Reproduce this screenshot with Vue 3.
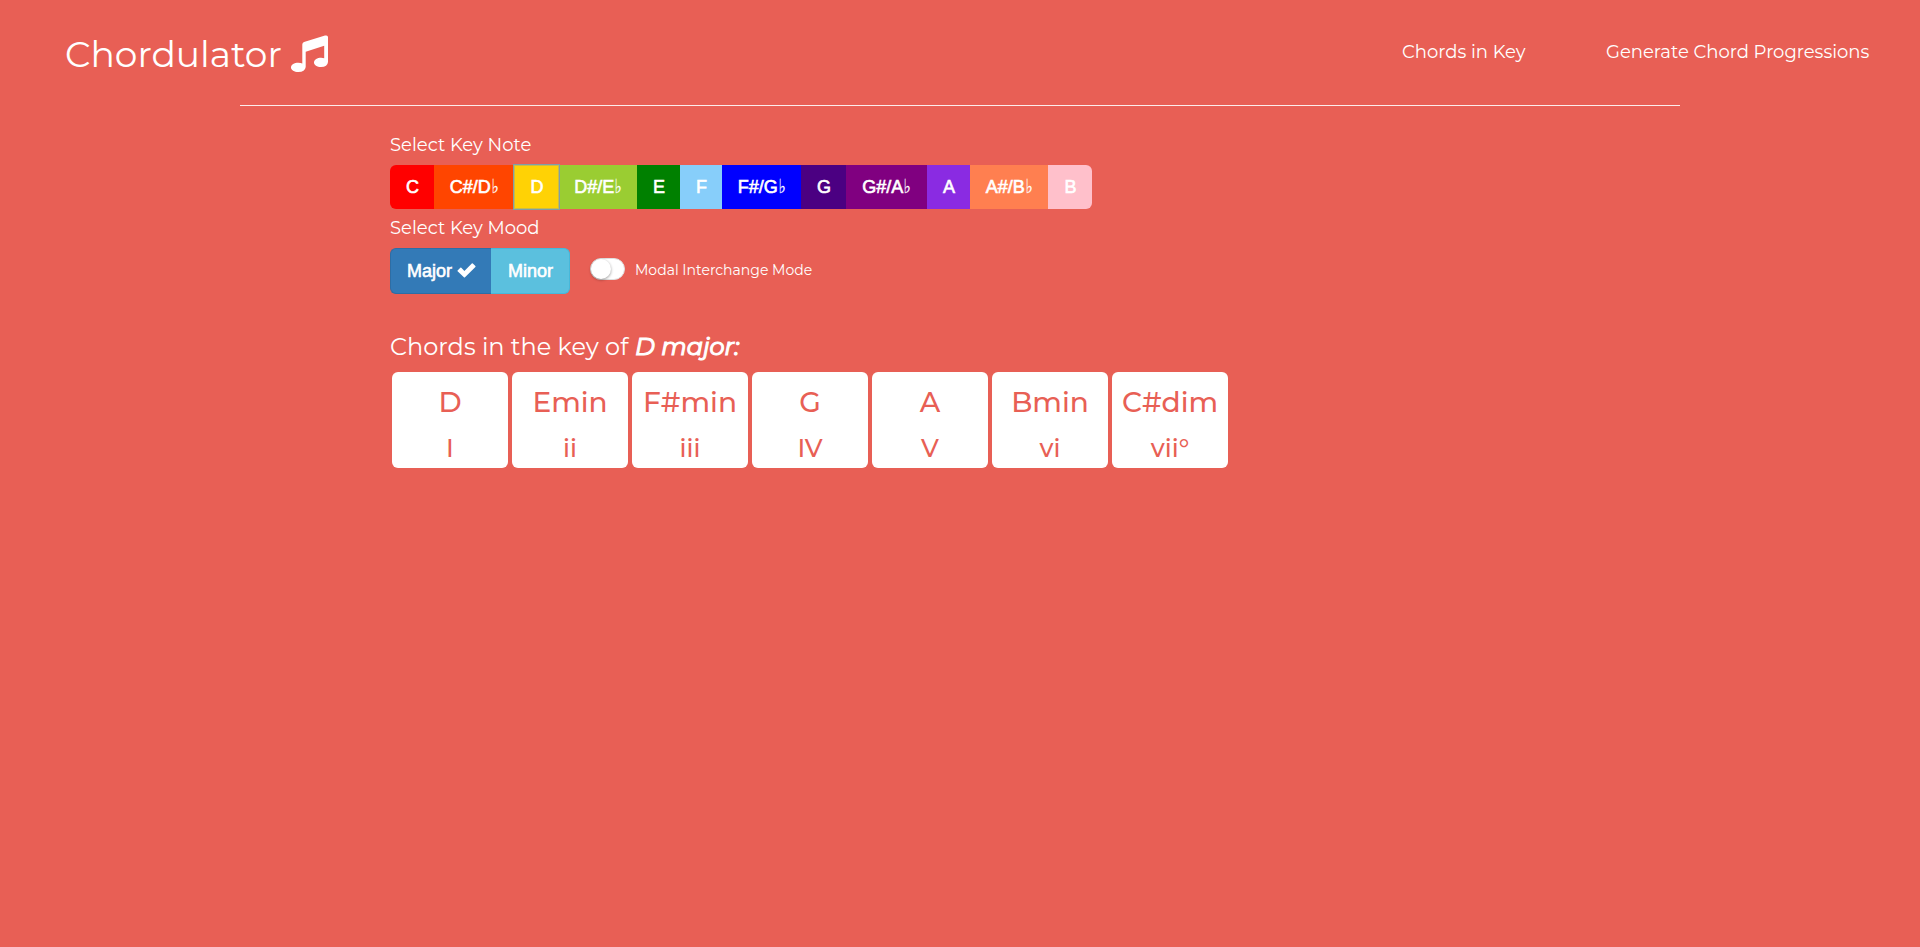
<script setup>
const notes = [
  { name: 'C', color: '#ff0000', width: 44 },
  { name: 'C#/D', flat: true, color: '#ff4500', width: 80 },
  { name: 'D', color: '#ffd205', width: 45, active: true },
  { name: 'D#/E', flat: true, color: '#9acd32', width: 78 },
  { name: 'E', color: '#008000', width: 43 },
  { name: 'F', color: '#87cefa', width: 42 },
  { name: 'F#/G', flat: true, color: '#0000ff', width: 79 },
  { name: 'G', color: '#4b0082', width: 45 },
  { name: 'G#/A', flat: true, color: '#800080', width: 81 },
  { name: 'A', color: '#8a2be2', width: 43 },
  { name: 'A#/B', flat: true, color: '#ff7f50', width: 78 },
  { name: 'B', color: '#ffc0cb', width: 44 },
]
const chords = [
  ['D', 'I'], ['Emin', 'ii'], ['F#min', 'iii'], ['G', 'IV'],
  ['A', 'V'], ['Bmin', 'vi'], ['C#dim', 'vii°'],
]
</script>

<template>
  <div class="page">
    <header class="header">
      <div class="brand">
        <span class="brand-name">Chordulator</span>
        <svg class="music" viewBox="0 0 37 37" fill="#fff">
          <path d="M11.3 9.5Q11.3 7.7 13 7.1L34 .6Q37 -.2 37 2.2V27Q36.5 32 30 32C26 32 23 30.2 23 27.5C23 24.5 26.5 22.8 30 22.8Q32 22.8 33.2 23.3V10.8L14.7 16.8V32Q14 37 7.3 37C3.3 37 0 35 0 32.4C0 29.7 3.3 27.8 7.3 27.8Q9.8 27.8 11.3 28.5Z" />
        </svg>
      </div>
      <nav class="nav">
        <a class="nav-a">Chords in Key</a>
        <a class="nav-b">Generate Chord Progressions</a>
      </nav>
    </header>
    <hr class="rule" />
    <main class="content">
      <div class="label">Select Key Note</div>
      <div class="notes">
        <button
          v-for="n in notes"
          :key="n.name"
          class="note"
          :class="{ active: n.active }"
          :style="{ background: n.color, width: n.width + 'px' }"
        >{{ n.name }}<span v-if="n.flat" class="flat">♭</span></button>
      </div>
      <div class="label mood-label">Select Key Mood</div>
      <div class="moods">
        <button class="mood major">
          Major
          <svg class="check" viewBox="0 0 19 15"><path d="M.6 7.4L3.3 4.7Q3.8 4.3 4.3 4.7L7.4 8L14.8.5Q15.3 0 15.8.5L18.4 3Q18.8 3.5 18.4 4L8 14.3Q7.4 14.8 6.9 14.3L.6 8.2Q.2 7.8.6 7.4Z" fill="#fff" /></svg>
        </button>
        <button class="mood minor">Minor</button>
        <span class="switch"><i></i></span>
        <span class="modal-text">Modal Interchange Mode</span>
      </div>
      <h3 class="heading">Chords in the key of&nbsp;<em>D major:</em></h3>
      <div class="cards">
        <div v-for="c in chords" :key="c[0]" class="card">
          <div class="name">{{ c[0] }}</div>
          <div class="degree">{{ c[1] }}</div>
        </div>
      </div>
    </main>
  </div>
</template>

<style>
body { background: #e85f55; }
</style>

<style scoped>
.page {
  min-height: 947px;
  color: #fff;
  font-family: Montserrat, Inter, "Open Sans", sans-serif;
}
.header { display: flex; justify-content: space-between; height: 105px; }
.brand { display: flex; align-items: flex-start; padding-left: 65px; }
.brand-name { width: 226px; font-size: 36px; font-weight: 400; line-height: 44px; padding-top: 32px; white-space: nowrap; }
.music { width: 37px; height: 37px; margin-top: 35px; }
.nav { display: flex; padding-top: 40px; font-size: 18px; line-height: 24px; white-space: nowrap; }
.nav-a { width: 204px; }
.nav-b { width: 314px; }
.rule { width: 1440px; height: 1px; margin: 0 auto; border: 0; background: #fdeceb; }
.content { padding: 27px 0 0 390px; }
.label { height: 32px; font-size: 18px; line-height: 24px; }
.mood-label { height: 32px; padding-top: 7px; }
.notes { display: flex; width: 702px; height: 44px; border-radius: 6px; }
.note {
  box-sizing: border-box; height: 44px; padding: 0 0 0 1px; border: 0; color: #fff; white-space: nowrap;
  font: 18px/24px "Liberation Sans", Arial, sans-serif;
  -webkit-text-stroke: .6px #fff;
}
.note:first-child { border-radius: 6px 0 0 6px; }
.note:last-child { border-radius: 0 6px 6px 0; }
.note.active { box-shadow: 0 0 0 1px #7f9fa8, inset 0 0 0 1px rgba(122, 155, 175, .4); position: relative; z-index: 1; }
.flat { display: inline-block; -webkit-text-stroke: .2px #fff; font-family: "DejaVu Sans", sans-serif; line-height: 1; transform: scale(.85, 1.08); transform-origin: 50% 82%; }
.moods { display: flex; align-items: center; height: 46px; }
.mood {
  box-sizing: border-box; height: 46px; padding: 0 0 0 1px; color: #fff;
  font: 18px/24px "Liberation Sans", Arial, sans-serif;
  -webkit-text-stroke: .6px #fff;
}
.major { width: 101px; background: #337ab7; border: 1px solid #2e6da4; border-right: 0; border-radius: 6px 0 0 6px; }
.minor { width: 79px; background: #5bc0de; border: 1px solid #46b8da; border-left: 0; border-radius: 0 6px 6px 0; }
.check { width: 19px; height: 15px; vertical-align: -1px; }
.switch { box-sizing: border-box; width: 35px; height: 22px; margin: -4px 10px 0 20px; border-radius: 11px; background: #fff; border: 1px solid #dfdfdf; }
.switch i { display: block; width: 20px; height: 20px; border-radius: 50%; background: #fff; box-shadow: 0 1px 3px rgba(0, 0, 0, .4); }
.modal-text { margin-top: -2px; font-size: 14px; line-height: 20px; }
.heading { margin: 37px 0 0; height: 41px; font-size: 24px; font-weight: 400; line-height: 32px; white-space: nowrap; }
.heading em { margin-left: .5px; font-style: italic; -webkit-text-stroke: 1.1px #fff; }
.cards { display: flex; gap: 4px; padding-left: 2px; }
.card { width: 116px; height: 96px; border-radius: 6px; background: #fff; color: #e85f55; text-align: center; font-weight: 500; }
.name { padding-top: 11px; font-size: 28px; line-height: 38px; }
.degree { padding-top: 10px; font-size: 25px; line-height: 34px; }
</style>
